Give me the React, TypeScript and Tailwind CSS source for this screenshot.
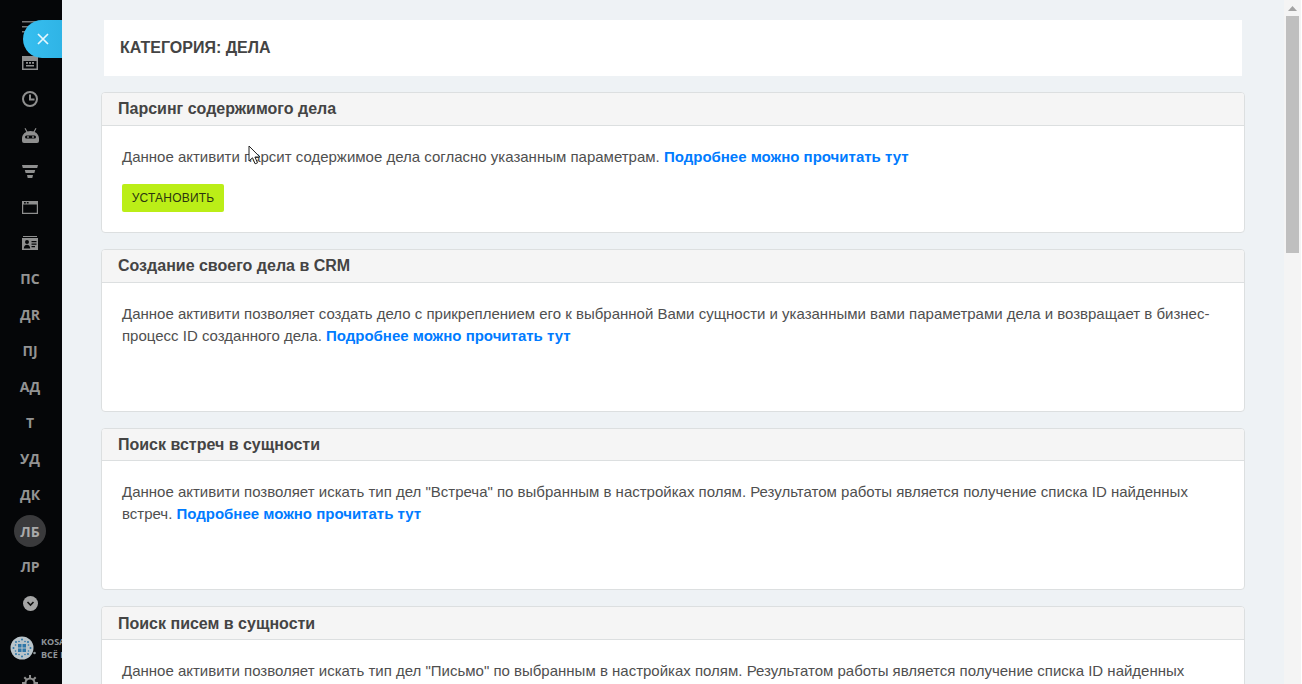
import React from "react";

const Keyboard = () => (
  <svg width="16" height="14" viewBox="0 0 16 14" fill="#8f8f8f"><path fillRule="evenodd" d="M0 0h16v14H0zM1.500 5v7.500h13V5z"/><path d="M4 6h2v1.800H4zM7 6h2v1.800H7zM10 6h2v1.800h-2zM4 9h8v1.500H4z"/></svg>
);
const Clock = () => (
  <svg width="18" height="18" viewBox="0 0 18 18" fill="none" stroke="#8f8f8f" strokeWidth="2"><circle cx="9" cy="9" r="7"/><path d="M9 4.500V9.500H13.500"/></svg>
);
const Robot = () => (
  <svg width="17" height="15" viewBox="0 0 17 15" fill="#8f8f8f"><path d="M3.500 0l2.200 4-1 .6L2.500.6zM13.500 0l-2.200 4 1 .6 2.200-4z"/><path fillRule="evenodd" d="M8.500 3c4.500 0 8.500 3 8.500 7.500V13a2 2 0 0 1-2 2H2a2 2 0 0 1-2-2v-2.500C0 6 4 3 8.500 3zM4.500 7.500a1.500 1.500 0 0 0 0 3h8a1.500 1.500 0 0 0 0-3z"/><circle cx="6" cy="9" r=".9"/><circle cx="11" cy="9" r=".9"/></svg>
);
const Funnel = () => (
  <svg width="16" height="13" viewBox="0 0 16 13" fill="#8f8f8f"><path d="M0 0h16l-.8 3H.8zM2.800 5h10.400l-.8 3H3.600zM5 10h6l-.7 3H5.700z"/></svg>
);
const Browser = () => (
  <svg width="16" height="13" viewBox="0 0 16 13" fill="#8f8f8f"><path fillRule="evenodd" d="M0 0h16v13H0zM1.200 3.500V11.800h13.600V3.500zM2 1v1.500h1.800V1zM4.800 1v1.500h1.800V1z"/></svg>
);
const Contact = () => (
  <svg width="16" height="14" viewBox="0 0 16 14" fill="#8f8f8f"><path d="M1 0h14v1H1z"/><path fillRule="evenodd" d="M0 2h16v12H0zM5 4a2 2 0 1 0 0 4 2 2 0 0 0 0-4zM1.800 12.500h6.400c0-2.300-1.400-3.700-3.200-3.700s-3.200 1.400-3.200 3.700zM9.500 5v1.200h5V5zM9.500 7.500v1.200h5V7.500zM9.500 10v1.200h3.500V10z"/></svg>
);

const Logo = () => (
  <svg className="shrink-0" width="26" height="24" viewBox="0 0 26 24">
    <circle cx="12" cy="12" r="11.500" fill="#b9c4ca"/>
    <circle cx="24.500" cy="17" r="1.300" fill="#8d9599"/>
    <g fill="#2f77a8">
      <path d="M8 8h8v8H8z"/>
      <circle cx="12" cy="3.500" r="1"/><circle cx="12" cy="20.500" r="1"/><circle cx="3.500" cy="12" r="1"/><circle cx="20.500" cy="12" r="1"/>
      <circle cx="6" cy="6" r="1"/><circle cx="18" cy="6" r="1"/><circle cx="6" cy="18" r="1"/><circle cx="18" cy="18" r="1"/>
      <circle cx="9" cy="5.500" r=".8"/><circle cx="15" cy="5.500" r=".8"/><circle cx="9" cy="18.500" r=".8"/><circle cx="15" cy="18.500" r=".8"/>
      <circle cx="5.500" cy="9" r=".8"/><circle cx="5.500" cy="15" r=".8"/><circle cx="18.500" cy="9" r=".8"/><circle cx="18.500" cy="15" r=".8"/>
    </g>
    <g fill="#b9c4ca"><path d="M11.500 8h1v8h-1zM8 11.500h8v1H8z"/></g>
  </svg>
);

const Rail = ({ children }: { children: React.ReactNode }) => (
  <div className="flex h-9 shrink-0 items-center justify-center">{children}</div>
);

const Abbr = ({ t }: { t: string }) => (
  <Rail><span className="text-[14px] leading-none font-bold text-[#939393]">{t}</span></Rail>
);

const Link = () => (
  <a className="font-bold text-[#007bff]">Подробнее можно прочитать тут</a>
);

const Card = ({ title, children, h, head = "h-[33px]" }: { title: string; children: React.ReactNode; h: string; head?: string }) => (
  <section className={`shrink-0 overflow-hidden rounded-[4px] border border-[#dcdfe0] bg-white ${h}`}>
    <h3 className={`flex items-center border-b border-[#dcdfe0] bg-[#f5f5f5] pl-4 text-[16px] font-bold text-[#444444] ${head}`}>{title}</h3>
    <div className="px-5 pt-5 text-[15px] leading-[22px] text-[#4f4f4f]">{children}</div>
  </section>
);

export default function App() {
  return (
    <div className="relative flex h-[684px] w-[1302px] overflow-hidden bg-[#eef2f5] font-['Liberation_Sans',Arial,sans-serif]">
      <aside className="flex w-[62px] shrink-0 flex-col overflow-hidden bg-[#050608] pt-[9px] pr-[2px] font-['Open_Sans',sans-serif]">
        <Rail>
          <svg width="16" height="14" viewBox="0 0 16 14" fill="#777"><path d="M0 1h16v1.500H0zM0 6h16v1.500H0zM0 11h16v1.500H0z"/></svg>
        </Rail>
        <Rail><Keyboard /></Rail>
        <Rail><Clock /></Rail>
        <Rail><Robot /></Rail>
        <Rail><Funnel /></Rail>
        <Rail><Browser /></Rail>
        <Rail><Contact /></Rail>
        <Abbr t="ПС" />
        <Abbr t="ДR" />
        <Abbr t="ПJ" />
        <Abbr t="АД" />
        <Abbr t="Т" />
        <Abbr t="УД" />
        <Abbr t="ДК" />
        <Rail>
          <span className="flex h-8 w-8 items-center justify-center rounded-full bg-[#3a3a3c] text-[14px] font-bold text-[#a9a9a9]">ЛБ</span>
        </Rail>
        <Abbr t="ЛР" />
        <Rail>
          <span className="flex h-[15px] w-[15px] items-center justify-center rounded-full bg-[#a5a5a5]">
            <svg width="9" height="9" viewBox="0 0 9 9" fill="none" stroke="#111" strokeWidth="1.600"><path d="M1.500 3l3 3 3-3"/></svg>
          </span>
        </Rail>
        <div className="mt-3 flex h-[30px] shrink-0 items-center gap-[5px] pl-[10px]">
          <Logo />
          <div className="whitespace-nowrap text-[9px] leading-[13px] font-bold text-[#8f9498]">KOSA<br />ВСЁ П</div>
        </div>
        <div className="mt-3 flex justify-center">
          <svg width="16" height="16" viewBox="0 0 16 16" fill="none" stroke="#8f8f8f" strokeWidth="2"><circle cx="8" cy="8" r="4.500"/><path d="M8 0v3M8 13v3M0 8h3M13 8h3M2.300 2.300l2 2M11.700 11.700l2 2M13.700 2.300l-2 2M4.300 11.700l-2 2"/></svg>
        </div>
      </aside>

      <main className="flex min-w-0 flex-1 flex-col gap-4 overflow-hidden pt-5 pl-[39px] pr-[39px]">
        <header className="mx-[3px] flex h-14 shrink-0 items-center bg-white pl-4 text-[16px] font-bold text-[#444444]">КАТЕГОРИЯ: ДЕЛА</header>
        <Card title="Парсинг содержимого дела" h="h-[141px]">
          <p>Данное активити парсит содержимое дела согласно указанным параметрам. <Link /></p>
          <button className="mt-4 flex h-[28px] w-[102px] items-center justify-center rounded-[2px] bg-[#bbee17] text-[12px] tracking-[0.2px] text-[#2b3510]">УСТАНОВИТЬ</button>
        </Card>
        <Card title="Создание своего дела в CRM" h="h-[163px]">
          <p>Данное активити позволяет создать дело с прикреплением его к выбранной Вами сущности и указанными вами параметрами дела и возвращает в бизнес-процесс ID созданного дела. <Link /></p>
        </Card>
        <Card title="Поиск встреч в сущности" h="h-[162px]" head="h-[32px]">
          <p>Данное активити позволяет искать тип дел "Встреча" по выбранным в настройках полям. Результатом работы является получение списка ID найденных встреч. <Link /></p>
        </Card>
        <Card title="Поиск писем в сущности" h="h-[162px]" head="h-[33px] pt-[2px]">
          <p>Данное активити позволяет искать тип дел "Письмо" по выбранным в настройках полям. Результатом работы является получение списка ID найденных писем. <Link /></p>
        </Card>
      </main>

      <div className="flex w-[18px] shrink-0 flex-col items-center border-r border-white bg-[#f4f4f4]">
        <svg className="mt-[6px]" width="9" height="5" viewBox="0 0 9 5" fill="#a3a3a3"><path d="M4.500 0L9 5H0z"/></svg>
        <div className="mt-[5px] h-[237px] w-[13px] bg-[#bfbfbf]" />
      </div>

      <button className="absolute top-5 left-[23px] flex h-[38px] w-[39px] items-center justify-start rounded-l-full bg-gradient-to-r from-[#37bff0] to-[#2fb4e6] pl-[14px]">
        <svg width="12" height="12" viewBox="0 0 12 12" stroke="#e6f7fd" strokeWidth="1.700" fill="none"><path d="M1 1l10 10M11 1L1 11"/></svg>
      </button>

      <svg className="absolute top-[145px] left-[248px]" width="14" height="20" viewBox="0 0 14 20">
        <path d="M1 1v15l3.500-3.200 2.600 6 2.400-1-2.600-5.800h5z" fill="#fff" stroke="#222" strokeWidth="1"/>
      </svg>
    </div>
  );
}
